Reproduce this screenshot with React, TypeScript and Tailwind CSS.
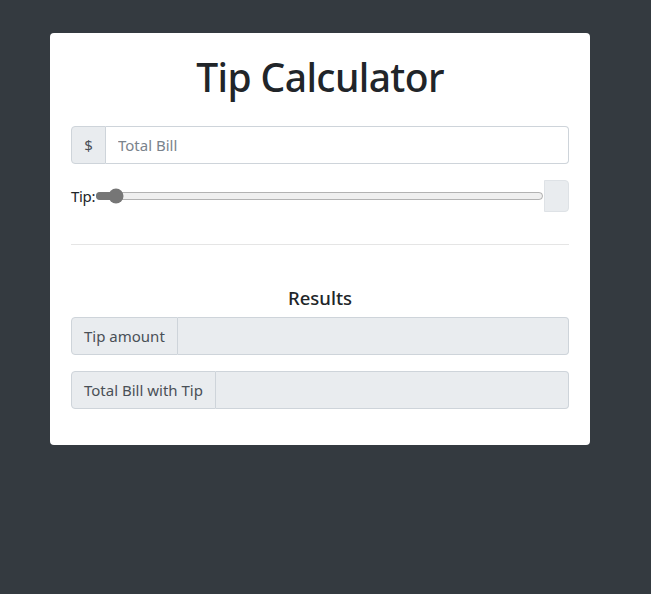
import { useState } from 'react';

export default function App() {
  const [bill, setBill] = useState('');
  const [tip, setTip] = useState(3);

  return (
    <div className="min-h-[594px] w-full bg-[#343a40] pt-[33px] pl-[50px] font-['Noto_Sans','Open_Sans',sans-serif] text-[#212529]">
      <div className="w-[540px] rounded bg-white px-[21px] pt-[20px] pb-[20px]">
        {/* Title */}
        <h1 className="h-[48px] text-center text-[39px] leading-[48px] font-medium tracking-[-0.6px]">
          Tip Calculator
        </h1>

        {/* Bill */}
        <div className="mt-[25px] flex h-[38px] w-full">
          <span className="flex w-[35px] items-center justify-center rounded-l border border-[#ced4da] bg-[#e9ecef] text-[15px] text-[#495057]">
            $
          </span>
          <input
            value={bill}
            onChange={(e) => setBill(e.target.value)}
            placeholder="Total Bill"
            className="min-w-0 flex-1 rounded-r border border-l-0 border-[#ced4da] px-3 text-[15px] text-[#495057] outline-none placeholder:text-[#7a838c]"
          />
        </div>

        {/* Tip slider */}
        <div className="mt-[16px] flex h-[32px] items-center">
          <label className="text-[15px] leading-none text-[#212529] tracking-[-0.3px]">Tip:</label>
          <input
            type="range"
            min={0}
            max={100}
            value={tip}
            onChange={(e) => setTip(Number(e.target.value))}
            className="mx-0 h-[16px] flex-1 accent-[#767676]"
          />
          <span className="h-[32px] w-[25px] rounded-r border border-[#dee2e6] bg-[#e9ecef]" />
        </div>

        <hr className="mt-[32px] border-t border-[#e5e5e5]" />

        {/* Results */}
        <h5 className="mt-[41px] text-center text-[18.5px] leading-[24px] font-medium">Results</h5>

        <div className="mt-[7px] flex h-[38px] w-full">
          <span className="flex items-center rounded-l border border-[#ced4da] bg-[#e9ecef] px-3 text-[15px] text-[#495057]">
            Tip amount
          </span>
          <input readOnly className="min-w-0 flex-1 rounded-r border border-l-0 border-[#ced4da] bg-[#e9ecef] outline-none" />
        </div>

        <div className="mt-[16px] mb-[16px] flex h-[38px] w-full">
          <span className="flex items-center rounded-l border border-[#ced4da] bg-[#e9ecef] px-3 text-[15px] text-[#495057]">
            Total Bill with Tip
          </span>
          <input readOnly className="min-w-0 flex-1 rounded-r border border-l-0 border-[#ced4da] bg-[#e9ecef] outline-none" />
        </div>
      </div>
    </div>
  );
}
